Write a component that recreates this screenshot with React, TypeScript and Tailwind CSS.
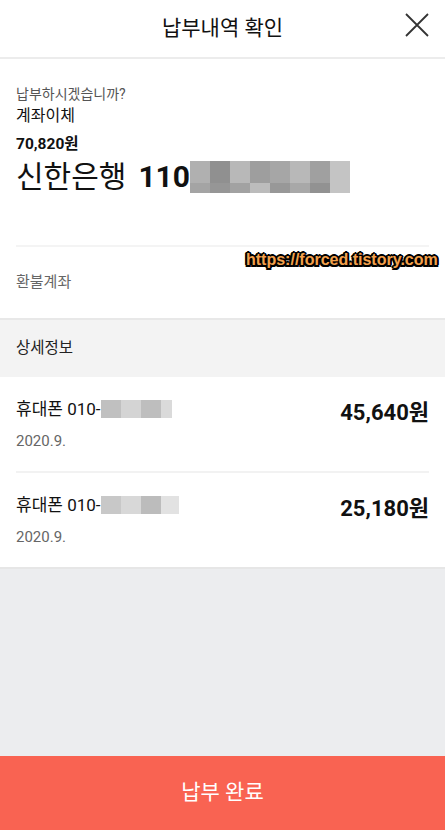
import React from "react";

const bankMosaic = [
  ["#b0b0b0", "#909090", "#b8b8b8", "#9e9e9e", "#a6a6a6", "#b8b8b8", "#a0a0a0", "#c4c4c4"],
  ["#a4a4a4", "#969696", "#a2a2a2", "#bcbcbc", "#989898", "#a8a8a8", "#929292", "#c4c4c4"],
];

function Mosaic({ cols, widths, h }: { cols: string[]; widths: number[]; h: number }) {
  return (
    <div className="flex">
      {cols.map((c, i) => (
        <div key={i} style={{ backgroundColor: c, width: widths[i], height: h }} />
      ))}
    </div>
  );
}

function Item({ amount, mosaic, widths }: { amount: string; mosaic: string[]; widths: number[] }) {
  return (
    <div className="flex justify-between items-start pt-[22px] h-[94px]">
      <div className="flex flex-col">
        <div className="flex items-center h-[20px]">
          <span className="text-[17px] text-[#111] leading-[20px]">휴대폰 010-</span>
          <Mosaic cols={mosaic} widths={widths} h={18} />
        </div>
        <div className="text-[15px] text-[#666] mt-[12px] leading-[20px]">2020.9.</div>
      </div>
      <div className="text-[22px] font-bold text-[#111] leading-[28px]">{amount}</div>
    </div>
  );
}

export default function App() {
  return (
    <div
      className="w-[445px] h-[830px] flex flex-col bg-[#ecedef] relative overflow-hidden"
      style={{ fontFamily: "Roboto, 'Noto Sans CJK KR', sans-serif" }}
    >
      {/* Header */}
      <div className="h-[59px] bg-white flex items-center justify-center relative border-b-2 border-[#ececec] shrink-0">
        <span className="text-[21px] text-[#111]">납부내역 확인</span>
        <svg className="absolute right-[16px] top-[13px]" width="24" height="24" viewBox="0 0 24 24">
          <path d="M1 1 L23 23 M23 1 L1 23" stroke="#333" strokeWidth="1.8" fill="none" />
        </svg>
      </div>

      {/* Payment info */}
      <div className="bg-white px-[16px] shrink-0">
        <div className="pt-[24px] text-[14px] text-[#555] leading-[22px]">납부하시겠습니까?</div>
        <div className="text-[16px] text-[#111] leading-[22px]">계좌이체</div>
        <div className="mt-[6px] text-[15.5px] font-bold text-[#111] leading-[22px]">70,820원</div>
        <div className="flex items-center h-[36px] mt-[4px]">
          <span className="text-[30px] text-[#111] leading-[36px]">신한은행</span>
          <span className="text-[30px] font-bold text-[#111] leading-[36px] ml-[12px]">110</span>
          <div className="flex flex-col">
            <Mosaic cols={bankMosaic[0]} widths={[20, 20, 20, 20, 20, 20, 20, 20]} h={22} />
            <Mosaic cols={bankMosaic[1]} widths={[20, 20, 20, 20, 20, 20, 20, 20]} h={10} />
          </div>
        </div>
        <div className="h-[50px]" />
        <div className="border-t-2 border-[#f4f4f4]" />
        <div className="h-[71px] flex items-center text-[15px] text-[#666] pb-[1px]">환불계좌</div>
      </div>

      {/* Section header */}
      <div className="h-[59px] bg-[#f3f3f3] border-t-2 border-[#e8e8e8] flex items-center px-[16px] shrink-0">
        <span className="text-[15.5px] text-[#222]">상세정보</span>
      </div>

      {/* List */}
      <div className="bg-white px-[16px] border-b-2 border-[#e6e6e6] shrink-0">
        <Item amount="45,640원" mosaic={["#c0c0c0", "#d4d4d4", "#bebebe", "#dadada"]} widths={[20, 20, 20, 11]} />
        <div className="border-t-2 border-[#f2f2f2]" />
        <Item amount="25,180원" mosaic={["#c8c8c8", "#d8d8d8", "#bcbcbc", "#e2e2e2"]} widths={[20, 20, 20, 18]} />
      </div>

      <div className="flex-1" />

      {/* Button */}
      <div className="h-[74px] bg-[#f96352] flex items-center justify-center shrink-0">
        <span className="text-[21px] text-white">납부 완료</span>
      </div>

      {/* Watermark */}
      <div
        className="absolute left-[246px] top-[250px] text-[16px] font-bold text-[#f3a04c] leading-[20px] [text-shadow:-1.5px_-1.5px_0_#000,1.5px_-1.5px_0_#000,-1.5px_1.5px_0_#000,1.5px_1.5px_0_#000,0_2px_0_#000,0_-2px_0_#000,2px_0_0_#000,-2px_0_0_#000]"
        style={{ fontFamily: "'Liberation Sans', Arial, sans-serif" }}
      >
        https://forced.tistory.com
      </div>
    </div>
  );
}
